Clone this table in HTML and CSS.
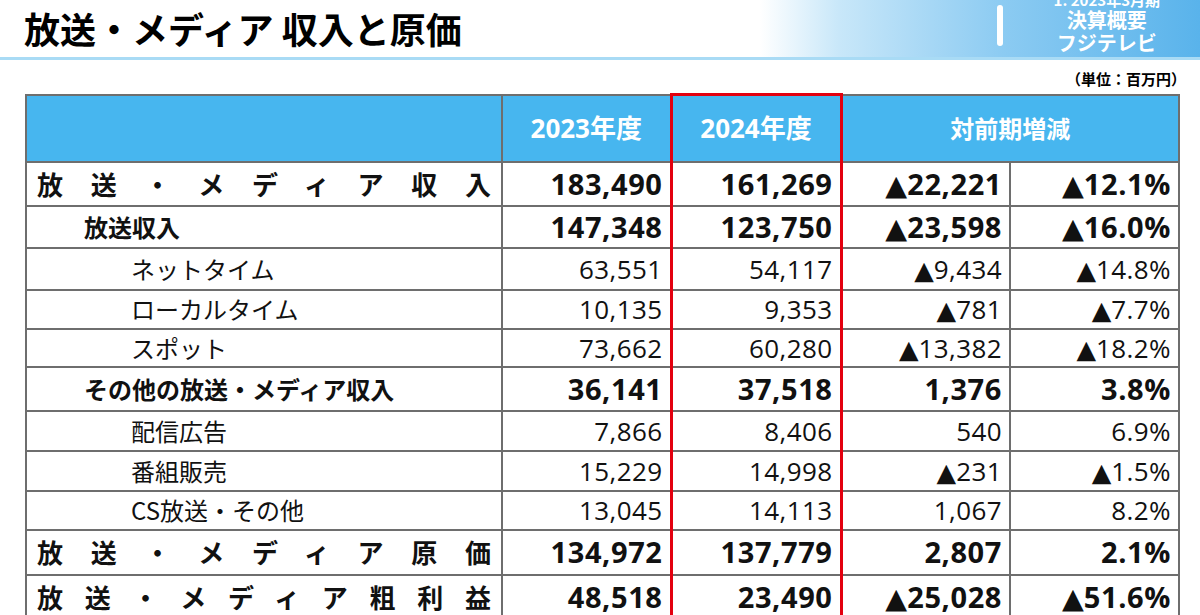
FILE: index.html
```html
<!DOCTYPE html>
<html lang="ja">
<head>
<meta charset="utf-8">
<title>放送・メディア 収入と原価</title>
<link rel="stylesheet" href="styles.css">
</head>
<body>
<header class="top">
  <h1 class="title">放送・メディア 収入と原価</h1>
  <div class="banner">
    <span class="bar"></span>
    <div class="banner-text">
      <div class="period">1. 2023年3月期</div>
      <div class="line">決算概要</div>
      <div class="line">フジテレビ</div>
    </div>
  </div>
</header>
<div class="unit">（単位：百万円）</div>
<table class="data">
  <colgroup>
    <col class="c-label"><col class="c-num"><col class="c-hl"><col class="c-num"><col class="c-num">
  </colgroup>
  <thead>
    <tr class="h-row">
      <th></th>
      <th class="yr">2023年度</th>
      <th class="yr hl hl-top">2024年度</th>
      <th class="jp" colspan="2">対前期増減</th>
    </tr>
  </thead>
  <tbody>
    <tr class="r44 bold">
      <td class="dist">放送・メディア収入</td>
      <td>183,490</td><td class="hl">161,269</td><td><span class="tri">▲</span>22,221</td><td><span class="tri">▲</span>12.1%</td>
    </tr>
    <tr class="r42 bold">
      <td class="sub">放送収入</td>
      <td>147,348</td><td class="hl">123,750</td><td><span class="tri">▲</span>23,598</td><td><span class="tri">▲</span>16.0%</td>
    </tr>
    <tr class="r42">
      <td class="item">ネットタイム</td>
      <td>63,551</td><td class="hl">54,117</td><td><span class="tri">▲</span>9,434</td><td><span class="tri">▲</span>14.8%</td>
    </tr>
    <tr class="r39">
      <td class="item">ローカルタイム</td>
      <td>10,135</td><td class="hl">9,353</td><td><span class="tri">▲</span>781</td><td><span class="tri">▲</span>7.7%</td>
    </tr>
    <tr class="r38">
      <td class="item">スポット</td>
      <td>73,662</td><td class="hl">60,280</td><td><span class="tri">▲</span>13,382</td><td><span class="tri">▲</span>18.2%</td>
    </tr>
    <tr class="r44 bold">
      <td class="sub">その他の放送・メディア収入</td>
      <td>36,141</td><td class="hl">37,518</td><td>1,376</td><td>3.8%</td>
    </tr>
    <tr class="r40">
      <td class="item">配信広告</td>
      <td>7,866</td><td class="hl">8,406</td><td>540</td><td>6.9%</td>
    </tr>
    <tr class="r40">
      <td class="item">番組販売</td>
      <td>15,229</td><td class="hl">14,998</td><td><span class="tri">▲</span>231</td><td><span class="tri">▲</span>1.5%</td>
    </tr>
    <tr class="r39">
      <td class="item">CS放送・その他</td>
      <td>13,045</td><td class="hl">14,113</td><td>1,067</td><td>8.2%</td>
    </tr>
    <tr class="r45 bold">
      <td class="dist">放送・メディア原価</td>
      <td>134,972</td><td class="hl">137,779</td><td>2,807</td><td>2.1%</td>
    </tr>
    <tr class="r44 bold">
      <td class="dist">放送・メディア粗利益</td>
      <td>48,518</td><td class="hl">23,490</td><td><span class="tri">▲</span>25,028</td><td><span class="tri">▲</span>51.6%</td>
    </tr>
  </tbody>
</table>
</body>
</html>
```

FILE: styles.css
```css
html, body {
  margin: 0;
  padding: 0;
  background: #ffffff;
}
body {
  width: 1200px;
  height: 615px;
  overflow: hidden;
  font-family: "Open Sans", "Noto Sans CJK JP", sans-serif;
  color: #111111;
}
.top {
  display: flex;
  height: 57px;
  border-bottom: 3px solid #a9dbf5;
}
.title {
  margin: 0;
  padding-left: 24px;
  flex: 1 1 auto;
  font-family: "Noto Sans CJK JP", sans-serif;
  font-weight: 700;
  font-size: 36px;
  line-height: 57px;
  color: #000000;
  white-space: pre;
}
.banner {
  flex: 0 0 440px;
  display: flex;
  align-items: flex-start;
  background: linear-gradient(90deg, #ffffff 0%, #c8e7f9 18%, #8ccbf2 55%, #59b3eb 100%);
  overflow: hidden;
}
.bar {
  display: block;
  width: 6px;
  height: 41px;
  margin: 5px 0 0 237px;
  background: #ffffff;
  border-radius: 3px;
}
.banner-text {
  margin-left: auto;
  margin-right: 40px;
  text-align: center;
  color: #ffffff;
  font-family: "Noto Sans CJK JP", sans-serif;
  font-weight: 700;
}
.period {
  font-size: 15px;
  line-height: 17px;
  margin-top: -9px;
}
.line {
  font-size: 20px;
  line-height: 23px;
}
.unit {
  padding: 10px 14px 5px 0;
  text-align: right;
  font-family: "Noto Sans CJK JP", sans-serif;
  font-weight: 700;
  font-size: 15px;
  line-height: 18px;
  color: #000000;
}
.data {
  margin-left: 25px;
  width: 1153px;
  table-layout: fixed;
  border-collapse: collapse;
}
.c-label { width: 476px; }
.c-num { width: 169px; }
.c-hl { width: 170px; }
.data th, .data td {
  border: 2px solid #6e6e6e;
  padding: 0 7px 0 0;
  white-space: nowrap;
  overflow: hidden;
  line-height: 28px;
}
.h-row { height: 67px; }
.h-row th {
  background: #47b6ef;
  color: #ffffff;
  font-weight: 700;
  text-align: center;
  padding: 0;
  vertical-align: middle;
  font-family: "Open Sans", "Noto Sans CJK JP", sans-serif;
}
.h-row .yr { font-size: 26px; }
.h-row .jp { font-size: 24px; font-family: "Noto Sans CJK JP", sans-serif; }
.data td {
  text-align: right;
  font-size: 26px;
  letter-spacing: 0.4px;
  vertical-align: middle;
}
.data .hl {
  border-left: 3px solid #e3000f;
  border-right: 3px solid #e3000f;
}
.data .hl-top {
  border-top: 3px solid #e3000f;
}
.bold td {
  font-weight: 700;
  font-size: 29px;
  letter-spacing: 0.6px;
}
.tri {
  font-family: "DejaVu Sans", sans-serif;
  font-size: 0.98em;
  line-height: 1px;
  letter-spacing: 0;
}
.data td.dist,
.data td.sub,
.data td.item {
  font-family: "Noto Sans CJK JP", sans-serif;
  letter-spacing: 0;
}
.data td.dist {
  text-align: justify;
  text-align-last: justify;
  text-justify: inter-character;
  padding: 0 10px 0 10px;
  font-size: 26px;
}
.data td.sub {
  text-align: left;
  padding-left: 57px;
  font-size: 24px;
}
.data td.item {
  text-align: left;
  padding-left: 104px;
  font-size: 24px;
  font-weight: 400;
}
.r38 { height: 38px; }
.r39 { height: 39px; }
.r40 { height: 40px; }
.r42 { height: 42px; }
.r44 { height: 44px; }
.r45 { height: 45px; }
```
